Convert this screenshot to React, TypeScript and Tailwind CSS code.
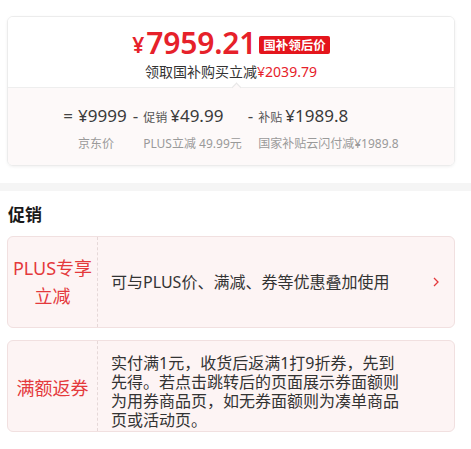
const font = { fontFamily: '"Noto Sans", "Noto Sans CJK SC", sans-serif' };

function Chevron() {
  return (
    <svg width="8" height="12" viewBox="0 0 8 12" className="shrink-0">
      <path d="M2 2 L6 6 L2 10" fill="none" stroke="#e4393c" strokeWidth="1.3" />
    </svg>
  );
}

export default function App() {
  const columns = [
    { op: "=", tag: "", value: "¥9999", label: "京东价" },
    { op: "-", tag: "促销", value: "¥49.99", label: "PLUS立减 49.99元" },
    { op: "-", tag: "补贴", value: "¥1989.8", label: "国家补贴云闪付减¥1989.8" },
  ];

  return (
    <div className="min-h-screen w-[471px] bg-white pt-4 text-[#333]" style={font}>
      {/* price card */}
      <div className="ml-[7px] w-[448px] overflow-hidden rounded-md border border-[#ececec] shadow-[0_1px_3px_rgba(0,0,0,0.06)]">
        <div className="flex flex-col items-center pt-[8px] pb-[5px] bg-white">
          <div className="flex items-center h-[36px]">
            <span className="text-[21px] font-semibold text-[#e6212a] leading-[36px] mt-[4px] mr-[2px]">¥</span>
            <span className="text-[30px] font-semibold text-[#e6212a] leading-[36px] tracking-[-0.2px]">7959.21</span>
            <span className="ml-[3px] mt-[3px] rounded-[2px] bg-[#e4151c] px-[4px] text-[12.5px] font-bold leading-[18px] text-white" style={{ fontFamily: '"Noto Sans CJK SC", sans-serif' }}>
              国补领后价
            </span>
          </div>
          <div className="text-[14px] leading-[20px] mt-[1px]">
            领取国补购买立减<span className="text-[#e6212a]">¥2039.79</span>
          </div>
        </div>
        <div className="relative border-t border-[#eee] bg-[#fdf9f9] pt-[16px] pb-[12px]">
          <div className="absolute -top-[4px] left-[225px] h-[7px] w-[7px] rotate-45 border-l border-t border-[#e6e6e6] bg-[#fdf9f9]" />
          <div className="flex justify-center gap-[6px]">
            {columns.map((c, i) => (
              <div key={i} className="flex items-start">
                <span className="text-[17px] leading-[24px] text-[#444] mr-[5px]">{c.op}</span>
                <div className="flex flex-col">
                  <div className="flex items-baseline gap-[3px] h-[24px]">
                    {c.tag && <span className="text-[12px] text-[#555]">{c.tag}</span>}
                    <span className="text-[17px] leading-[24px] text-[#3a3a3a]">{c.value}</span>
                  </div>
                  <span className="mt-[7px] text-[12px] leading-[18px] text-[#9a9a9a]">{c.label}</span>
                </div>
              </div>
            ))}
          </div>
        </div>
      </div>

      <div className="mt-[17px] h-[8px] bg-[#f5f5f5]" />

      {/* promotions */}
      <div className="px-[7px]">
        <h2 className="mt-[12px] ml-[1px] text-[17px] font-bold leading-[24px] text-[#1a1a1a]">促销</h2>

        <div className="mt-[9px] w-[448px] flex rounded-md border border-[#f1e0e0] bg-[#fdf4f4]">
          <div className="flex w-[90px] shrink-0 flex-col items-center justify-center border-r border-dashed border-[#e6d8d8] py-[17px] text-center text-[18px] leading-[28px] text-[#e4393c]">
            <span>PLUS专享</span>
            <span>立减</span>
          </div>
          <div className="flex flex-1 items-center justify-between pl-[13px] pr-[14px] text-[16px]">
            <span>可与PLUS价、满减、券等优惠叠加使用</span>
            <Chevron />
          </div>
        </div>

        <div className="mt-[12px] w-[448px] flex rounded-md border border-[#f1e0e0] bg-[#fdf4f4]">
          <div className="flex w-[90px] shrink-0 items-center justify-center border-r border-dashed border-[#e6d8d8] pt-[4px] text-[18px] text-[#e4393c]">
            满额返券
          </div>
          <div className="pl-[13px] pt-[13px] pb-[1px]">
            <p className="w-[294px] text-[16px] leading-[19px]">
              实付满1元，收货后返满1打9折券，先到先得。若点击跳转后的页面展示券面额则为用券商品页，如无券面额则为凑单商品页或活动页。
            </p>
          </div>
        </div>
      </div>
    </div>
  );
}
